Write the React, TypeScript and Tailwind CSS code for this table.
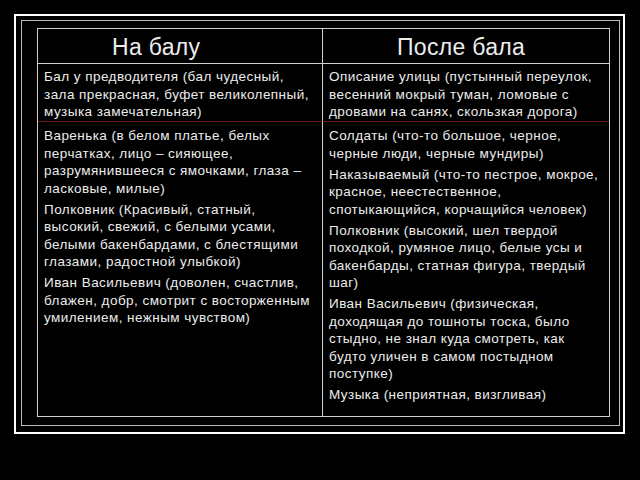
const left = [
  ['Бал у предводителя (бал чудесный,', 'зала прекрасная, буфет великолепный,', 'музыка замечательная)'],
];

const leftRest = [
  ['Варенька (в белом платье, белых', 'перчатках, лицо – сияющее,', 'разрумянившееся с ямочками, глаза –', 'ласковые, милые)'],
  ['Полковник (Красивый, статный,', 'высокий, свежий, с белыми усами,', 'белыми бакенбардами, с блестящими', 'глазами, радостной улыбкой)'],
  ['Иван Васильевич (доволен, счастлив,', 'блажен, добр, смотрит с восторженным', 'умилением, нежным чувством)'],
];

const right = [
  ['Описание улицы (пустынный переулок,', 'весенний мокрый туман, ломовые с', 'дровами на санях, скользкая дорога)'],
];

const rightRest = [
  ['Солдаты (что-то большое, черное,', 'черные люди, черные мундиры)'],
  ['Наказываемый (что-то пестрое, мокрое,', 'красное, неестественное,', 'спотыкающийся, корчащийся человек)'],
  ['Полковник (высокий, шел твердой', 'походкой, румяное лицо, белые усы и', 'бакенбарды, статная фигура, твердый', 'шаг)'],
  ['Иван Васильевич (физическая,', 'доходящая до тошноты тоска, было', 'стыдно, не знал куда смотреть, как', 'будто уличен в самом постыдном', 'поступке)'],
  ['Музыка (неприятная, визгливая)'],
];

function Para({ lines, first }: { lines: string[]; first?: boolean }) {
  return (
    <p className={`whitespace-nowrap ${first ? '' : 'mt-[3.5px]'}`}>
      {lines.map((l, i) => (
        <span key={i} className="block">
          {l}
        </span>
      ))}
    </p>
  );
}

export default function App() {
  return (
    <div
      className="w-[640px] h-[480px] bg-black overflow-hidden pt-[14px] pl-[14px]"
      style={{ fontFamily: '"Liberation Sans", Arial, sans-serif' }}
    >
      {/* outer slide frame */}
      <div className="w-[611px] h-[420px] border-2 border-white pt-[4px] pl-[5px]">
        <div className="w-[599px] h-[406px] border border-[#bdbdbd] pt-[7px] pl-[15px]">
          {/* table */}
          <div className="w-[573px] h-[389px] border border-[#d0d0d0] grid grid-cols-[285px_1fr] grid-rows-[35px_auto_1fr] text-[#ececec]">
            <div className="border-r border-b border-[#d0d0d0] pl-[74px] flex items-center text-[23px] tracking-[0.3px] leading-none pt-[2px]">
              На балу
            </div>
            <div className="border-b border-[#d0d0d0] pl-[74px] flex items-center text-[23px] tracking-[0.3px] leading-none pt-[2px]">
              После бала
            </div>

            <div className="border-r border-b border-r-[#d0d0d0] border-b-[#6a1c1c] pl-[6px] pt-[4px] text-[13.5px] tracking-[0.45px] leading-[17.5px]">
              {left.map((p, i) => (
                <Para key={i} lines={p} first={i === 0} />
              ))}
            </div>
            <div className="border-b border-[#6a1c1c] pl-[6px] pt-[4px] text-[13.5px] tracking-[0.45px] leading-[17.5px]">
              {right.map((p, i) => (
                <Para key={i} lines={p} first={i === 0} />
              ))}
            </div>

            <div className="border-r border-[#d0d0d0] pl-[6px] pt-[5.5px] text-[13.5px] tracking-[0.45px] leading-[17.5px]">
              {leftRest.map((p, i) => (
                <Para key={i} lines={p} first={i === 0} />
              ))}
            </div>
            <div className="pl-[6px] pt-[5.5px] text-[13.5px] tracking-[0.45px] leading-[17.5px]">
              {rightRest.map((p, i) => (
                <Para key={i} lines={p} first={i === 0} />
              ))}
            </div>
          </div>
        </div>
      </div>
    </div>
  );
}
